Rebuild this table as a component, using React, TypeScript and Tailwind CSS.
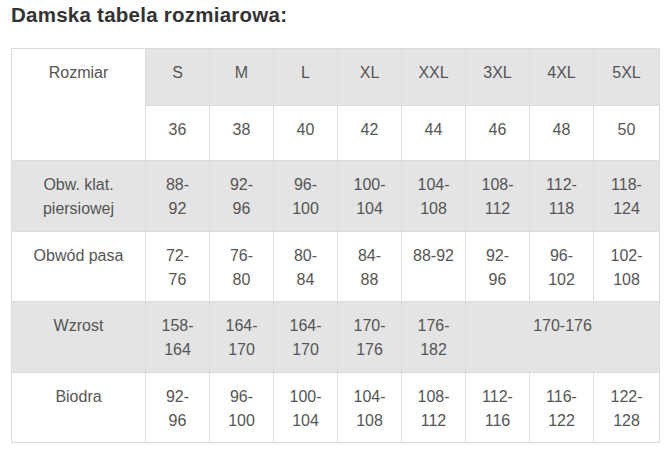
import React from "react";

type Cell = { lines: string[]; span?: number };
type Row = { label: string[]; gray: boolean; h: number; cells: Cell[] };

const c = (...lines: string[]): Cell => ({ lines });

const rows: Row[] = [
  {
    label: ["Obw. klat.", "piersiowej"],
    gray: true,
    h: 71,
    cells: [c("88-", "92"), c("92-", "96"), c("96-", "100"), c("100-", "104"), c("104-", "108"), c("108-", "112"), c("112-", "118"), c("118-", "124")],
  },
  {
    label: ["Obwód pasa"],
    gray: false,
    h: 70,
    cells: [c("72-", "76"), c("76-", "80"), c("80-", "84"), c("84-", "88"), c("88-92"), c("92-", "96"), c("96-", "102"), c("102-", "108")],
  },
  {
    label: ["Wzrost"],
    gray: true,
    h: 71,
    cells: [c("158-", "164"), c("164-", "170"), c("164-", "170"), c("170-", "176"), c("176-", "182"), { lines: ["170-176"], span: 3 }],
  },
  {
    label: ["Biodra"],
    gray: false,
    h: 70,
    cells: [c("92-", "96"), c("96-", "100"), c("100-", "104"), c("104-", "108"), c("108-", "112"), c("112-", "116"), c("116-", "122"), c("122-", "128")],
  },
];

const sizes = ["S", "M", "L", "XL", "XXL", "3XL", "4XL", "5XL"];
const eu = ["36", "38", "40", "42", "44", "46", "48", "50"];

const td = "border border-[#dcdcdc] text-center align-top pt-[12px] px-1 text-[16px] leading-6 text-[#555]";

const Lines = ({ lines }: { lines: string[] }) => (
  <>
    {lines.map((l, i) => (
      <React.Fragment key={i}>
        {i > 0 && <br />}
        {l}
      </React.Fragment>
    ))}
  </>
);

export default function App() {
  return (
    <div className="w-[666px] h-[450px] bg-white overflow-hidden" style={{ fontFamily: '"Liberation Sans", Arial, sans-serif' }}>
      <h1 className="ml-[11px] mt-[4px] text-[20.5px] leading-[22px] tracking-[0.25px] font-bold text-[#333]">Damska tabela rozmiarowa:</h1>
      <table className="ml-[11px] mt-[22px] w-[649px] table-fixed border-collapse">
        <colgroup>
          <col className="w-[134px]" />
          <col className="w-[64px]" />
          <col className="w-[64px]" />
          <col className="w-[64px]" />
          <col className="w-[64px]" />
          <col className="w-[64px]" />
          <col className="w-[64px]" />
          <col className="w-[64px]" />
          <col className="w-[66px]" />
        </colgroup>
        <tbody>
          <tr className="h-[57px]">
            <td rowSpan={2} className={`${td} bg-white`}>Rozmiar</td>
            {sizes.map((s) => (
              <td key={s} className={`${td} bg-[#e4e4e4]`}>{s}</td>
            ))}
          </tr>
          <tr className="h-[55px]">
            {eu.map((s) => (
              <td key={s} className={`${td} bg-white`}>{s}</td>
            ))}
          </tr>
          {rows.map((r, ri) => (
            <tr key={ri} style={{ height: r.h }}>
              <td className={`${td} ${r.gray ? "bg-[#e4e4e4]" : "bg-white"}`}>
                <Lines lines={r.label} />
              </td>
              {r.cells.map((cell, ci) => (
                <td key={ci} colSpan={cell.span} className={`${td} ${r.gray ? "bg-[#e4e4e4]" : "bg-white"}`}>
                  <Lines lines={cell.lines} />
                </td>
              ))}
            </tr>
          ))}
        </tbody>
      </table>
    </div>
  );
}
